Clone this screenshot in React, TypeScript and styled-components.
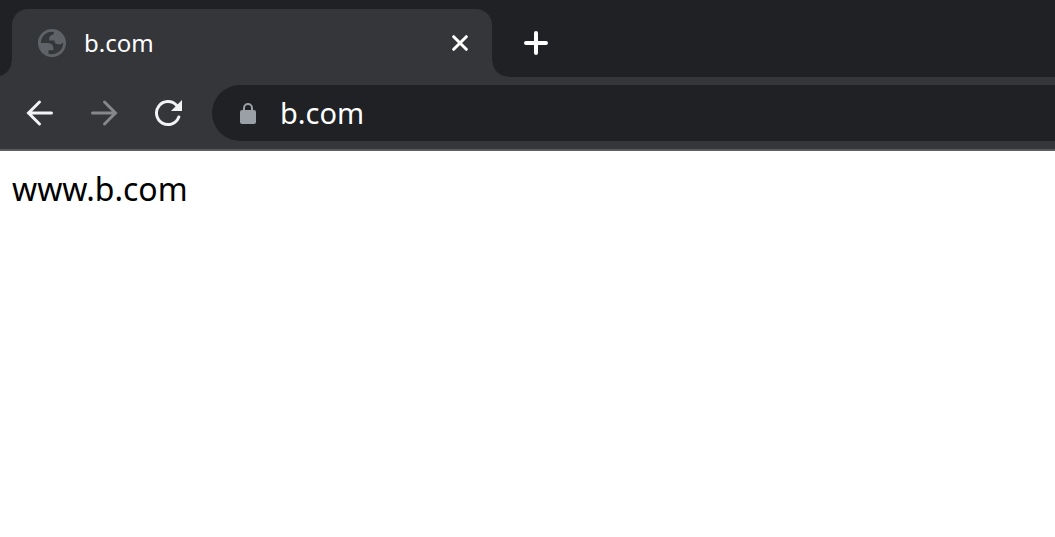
import React from "react";
import styled, { createGlobalStyle } from "styled-components";

const GlobalStyle = createGlobalStyle`
  * { box-sizing: border-box; }
  body {
    margin: 0;
    background: #fff;
    font-family: "Noto Sans", "Open Sans", sans-serif;
  }
`;

const Browser = styled.div`
  display: flex;
  flex-direction: column;
  min-height: 100vh;
`;

const TabStrip = styled.div`
  display: flex;
  align-items: flex-end;
  height: 77px;
  padding: 9px 0 0 12px;
  background: #202124;
  overflow: hidden;
`;

const Tab = styled.div`
  position: relative;
  display: flex;
  align-items: center;
  width: 480px;
  height: 68px;
  padding: 0 20px 0 26px;
  background: #35363a;
  border-radius: 16px 16px 0 0;

  &::before,
  &::after {
    content: "";
    position: absolute;
    bottom: 0;
    width: 16px;
    height: 16px;
  }
  &::before {
    right: 100%;
    background: radial-gradient(circle at 0 0, #202124 15px, #35363a 16px);
  }
  &::after {
    left: 100%;
    background: radial-gradient(circle at 100% 0, #202124 15px, #35363a 16px);
  }
`;

const TabTitle = styled.span`
  flex: 1;
  padding-left: 18px;
  color: #fff;
  font-size: 24px;
  line-height: 32px;
`;

const IconButton = styled.button<{ $size: number }>`
  display: flex;
  align-items: center;
  justify-content: center;
  flex: none;
  width: ${(p) => p.$size}px;
  height: ${(p) => p.$size}px;
  padding: 0;
  border: 0;
  background: none;
  color: #f1f3f4;

  &:disabled {
    color: #86878a;
  }
`;

const NewTab = styled.div`
  display: flex;
  align-items: center;
  height: 68px;
  padding-left: 28px;
`;

const Toolbar = styled.div`
  display: flex;
  align-items: center;
  height: 74px;
  padding-left: 20px;
  gap: 24px;
  background: #35363a;
  border-bottom: 2px solid #5c5d60;
`;

const AddressBar = styled.label`
  display: flex;
  align-items: center;
  flex: 1;
  min-width: 0;
  height: 56px;
  padding-left: 28px;
  gap: 24px;
  border-radius: 28px 0 0 28px;
  background: #202124;
`;

const AddressInput = styled.input`
  flex: 1;
  min-width: 0;
  padding: 0;
  border: 0;
  outline: 0;
  background: none;
  color: #fff;
  font: inherit;
  font-size: 29px;
  line-height: 40px;
`;

const Page = styled.main`
  flex: 1;
  padding: 14px 12px;
  color: #000;
  font-size: 32px;
  line-height: 48px;
`;

const Globe = () => (
  <svg width="28" height="28" viewBox="2 2 20 20" aria-hidden="true">
    <path
      fill="#5f6368"
      fillRule="evenodd"
      d="M12 2C6.477 2 2 6.477 2 12s4.477 10 10 10 10-4.477 10-10S17.523 2 12 2zM4 12h4.4c3.407.022 4.922 1.73 4.543 5.127H9.488v2.47a8.004 8.004 0 0 0 10.498-8.083C19.327 12.504 18.332 13 17 13c-2.137 0-3.206-.916-3.206-2.75h-3.748c-.274-2.728.683-4.092 2.87-4.092 0-.975.327-1.597.811-1.97A8.004 8.004 0 0 0 4 12z"
    />
  </svg>
);

const CloseIcon = () => (
  <svg width="16" height="16" viewBox="0 0 16 16" fill="none" stroke="#fff" strokeWidth="3" strokeLinecap="round" aria-hidden="true">
    <path d="M1.700 1.700L14.300 14.300M14.300 1.700L1.700 14.300" />
  </svg>
);

const PlusIcon = () => (
  <svg width="24" height="24" viewBox="0 0 24 24" fill="none" stroke="#fff" strokeWidth="4" strokeLinecap="round" aria-hidden="true">
    <path d="M12 2V22M2 12H22" />
  </svg>
);

const BackIcon = () => (
  <svg width="28" height="28" viewBox="0 0 28 28" fill="none" stroke="currentColor" strokeWidth="3" strokeLinecap="round" aria-hidden="true">
    <path d="M13.500 3L2.500 14L13.500 25M3 14H25.500" />
  </svg>
);

const ForwardIcon = () => (
  <svg width="28" height="28" viewBox="0 0 28 28" fill="none" stroke="currentColor" strokeWidth="3" strokeLinecap="round" aria-hidden="true">
    <path d="M14.500 3L25.500 14L14.500 25M25 14H2.500" />
  </svg>
);

const ReloadIcon = () => (
  <svg width="28" height="28" viewBox="0 0 28 28" aria-hidden="true">
    <path
      d="M24.800 18A11.500 11.500 0 1 1 22.500 6.300"
      fill="none"
      stroke="currentColor"
      strokeWidth="3"
      strokeLinecap="round"
    />
    <path d="M28 1V12H17Z" fill="currentColor" />
  </svg>
);

const LockIcon = () => (
  <svg width="16" height="22" viewBox="0 0 16 22" aria-hidden="true">
    <path d="M4 9V6A4 4 0 0 1 12 6V9" fill="none" stroke="#9aa0a6" strokeWidth="2" />
    <rect y="8" width="16" height="14" rx="2" fill="#9aa0a6" />
  </svg>
);

export default function App() {
  return (
    <Browser>
      <GlobalStyle />
      <TabStrip>
        <Tab>
          <Globe />
          <TabTitle>b.com</TabTitle>
          <IconButton $size={24} aria-label="Close tab">
            <CloseIcon />
          </IconButton>
        </Tab>
        <NewTab>
          <IconButton $size={32} aria-label="New tab">
            <PlusIcon />
          </IconButton>
        </NewTab>
      </TabStrip>
      <Toolbar>
        <IconButton $size={40} aria-label="Back">
          <BackIcon />
        </IconButton>
        <IconButton $size={40} aria-label="Forward" disabled>
          <ForwardIcon />
        </IconButton>
        <IconButton $size={40} aria-label="Reload">
          <ReloadIcon />
        </IconButton>
        <AddressBar>
          <LockIcon />
          <AddressInput aria-label="Address" defaultValue="b.com" />
        </AddressBar>
      </Toolbar>
      <Page>www.b.com</Page>
    </Browser>
  );
}
